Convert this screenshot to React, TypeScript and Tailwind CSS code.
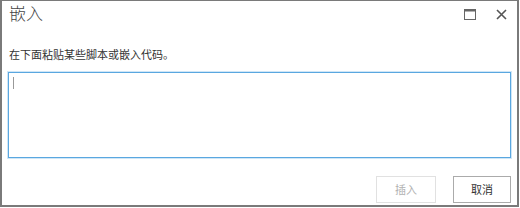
import React from "react";

const font = { fontFamily: '"Noto Sans CJK SC", "Liberation Sans", sans-serif' };

export default function App() {
  return (
    <div className="w-[520px] h-[208px] bg-white" style={font}>
      <div className="w-[519px] h-[207px] border-2 border-t border-[#7a7a7a] flex flex-col px-[6px]">
        <div className="flex items-start justify-between h-[35px]">
          <h1 className="text-[17px] leading-[22px] font-light text-[#444] pt-[1px] pl-[1px]">嵌入</h1>
          <div className="flex items-center gap-[20px] pt-[8px] pr-[4px]">
            <svg width="12" height="11" viewBox="0 0 12 11">
              <rect x="0.5" y="0.5" width="11" height="10" fill="none" stroke="#666" strokeWidth="1" />
              <rect x="0.5" y="0.5" width="11" height="2" fill="#666" />
            </svg>
            <svg width="11" height="11" viewBox="0 0 11 11">
              <path d="M1 1 L10 10 M10 1 L1 10" stroke="#555" strokeWidth="1.6" />
            </svg>
          </div>
        </div>
        <p className="text-[11px] leading-[18px] text-[#333] mt-[9px] pl-[1px]">在下面粘贴某些脚本或嵌入代码。</p>
        <div className="mt-[9px] h-[86px] border border-[#5aa7e0] shadow-[0_0_0_1px_#cfe6f7] relative">
          <div className="absolute left-[4px] top-[4px] w-[1px] h-[12px] bg-[#999]" />
        </div>
        <div className="flex justify-end gap-[17px] mt-[18px]">
          <button className="w-[60px] h-[27px] border border-[#e1e1e1] text-[11px] text-[#b1b1b1] bg-white">插入</button>
          <button className="w-[58px] h-[27px] border border-[#ababab] text-[11px] text-[#333] bg-white">取消</button>
        </div>
      </div>
    </div>
  );
}
